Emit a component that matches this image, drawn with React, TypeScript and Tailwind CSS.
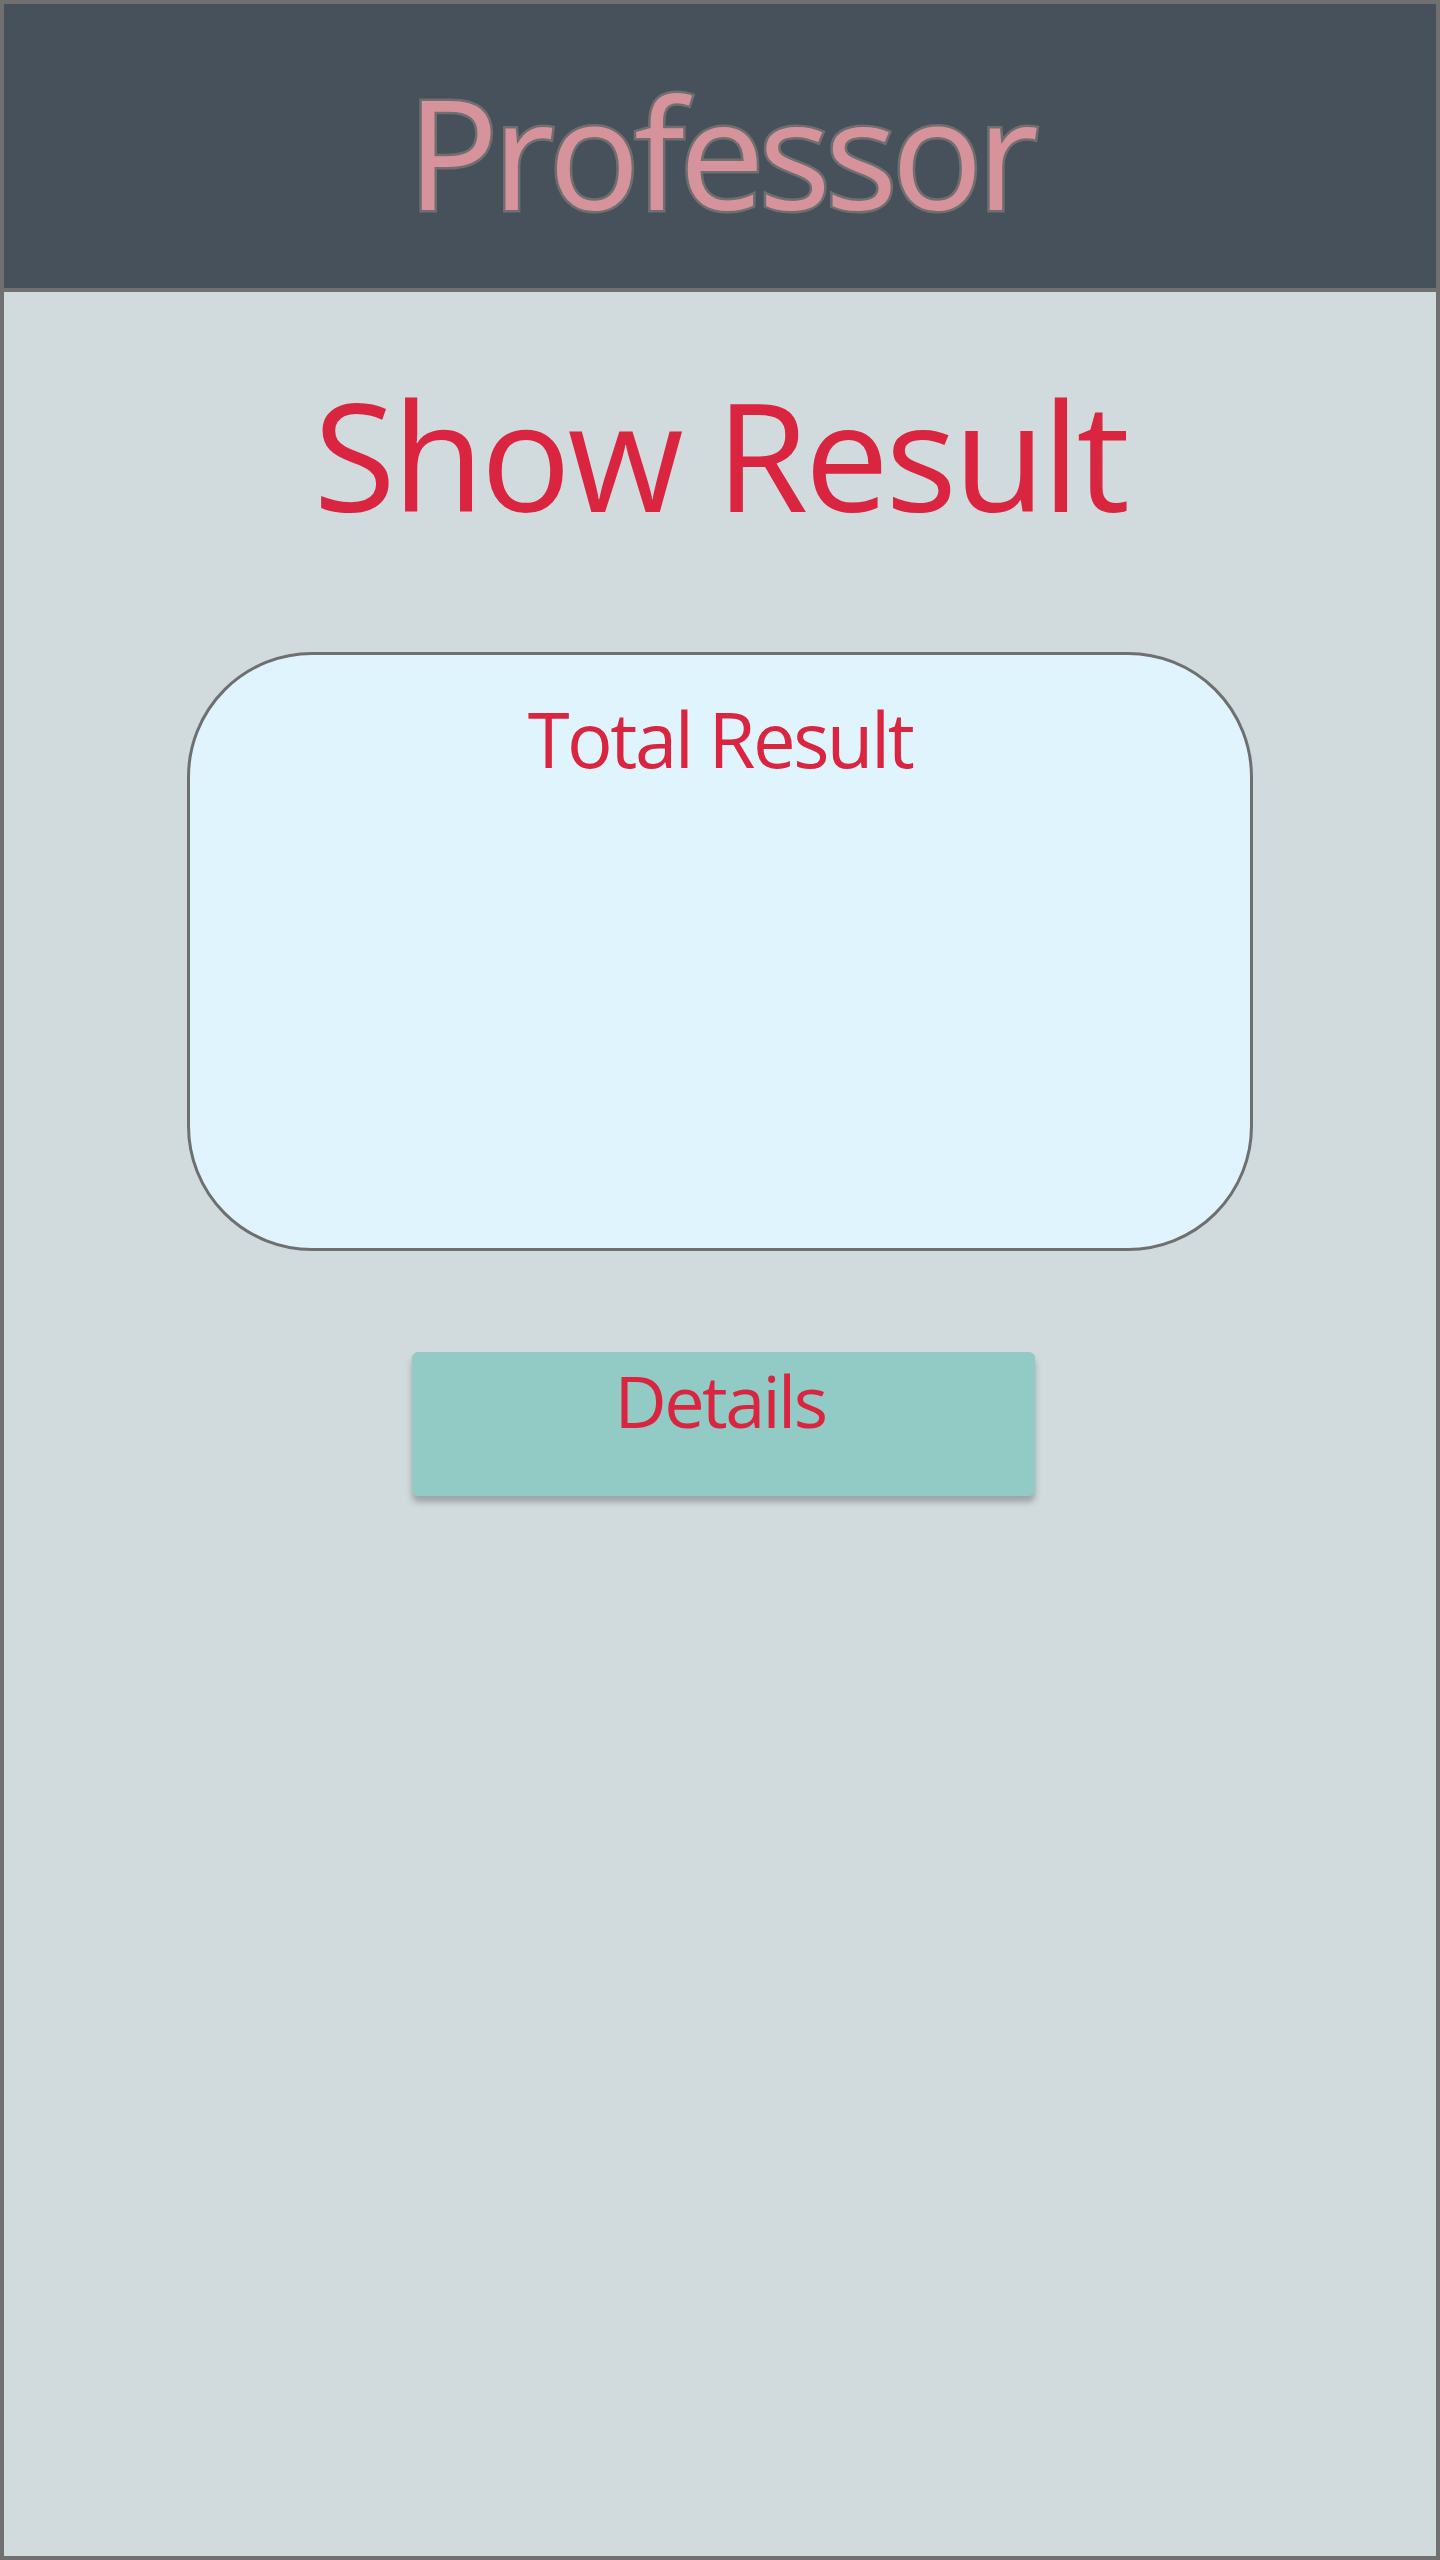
export default function App() {
  return (
    <div className="flex h-[2560px] w-[1440px] flex-col border-4 border-[#707070] bg-[#d1dadd] font-['Open_Sans','Noto_Sans',sans-serif]">
      <header className="flex h-[288px] shrink-0 justify-center border-b-4 border-[#707070] bg-[#47515b] pt-[72px]">
        <h1 className="text-[152px] leading-none tracking-[-6px] text-[#d6939b] [-webkit-text-stroke:5px_#6f6f6f] [paint-order:stroke_fill]">
          Professor
        </h1>
      </header>

      <main className="flex flex-col items-center">
        <h2 className="mt-[87px] text-[150px] leading-none tracking-[-3.5px] text-[#d9253f]">Show Result</h2>

        <section className="mt-[123px] flex h-[599px] w-[1066px] flex-col items-center rounded-[125px] border-[3px] border-[#6f6f6f] bg-[#e0f4fe] pt-[46px]">
          <h3 className="text-[76px] leading-none tracking-[-2.5px] text-[#d9253f]">Total Result</h3>
        </section>

        <button className="mt-[101px] ml-[7px] flex h-[144px] w-[623px] justify-center rounded-[6px] bg-[#92cbc5] pt-[12px] shadow-[0_6px_6px_rgba(0,0,0,0.25)]">
          <span className="-ml-[7px] text-[72px] leading-none tracking-[-2.6px] text-[#d9253f]">Details</span>
        </button>
      </main>
    </div>
  );
}
